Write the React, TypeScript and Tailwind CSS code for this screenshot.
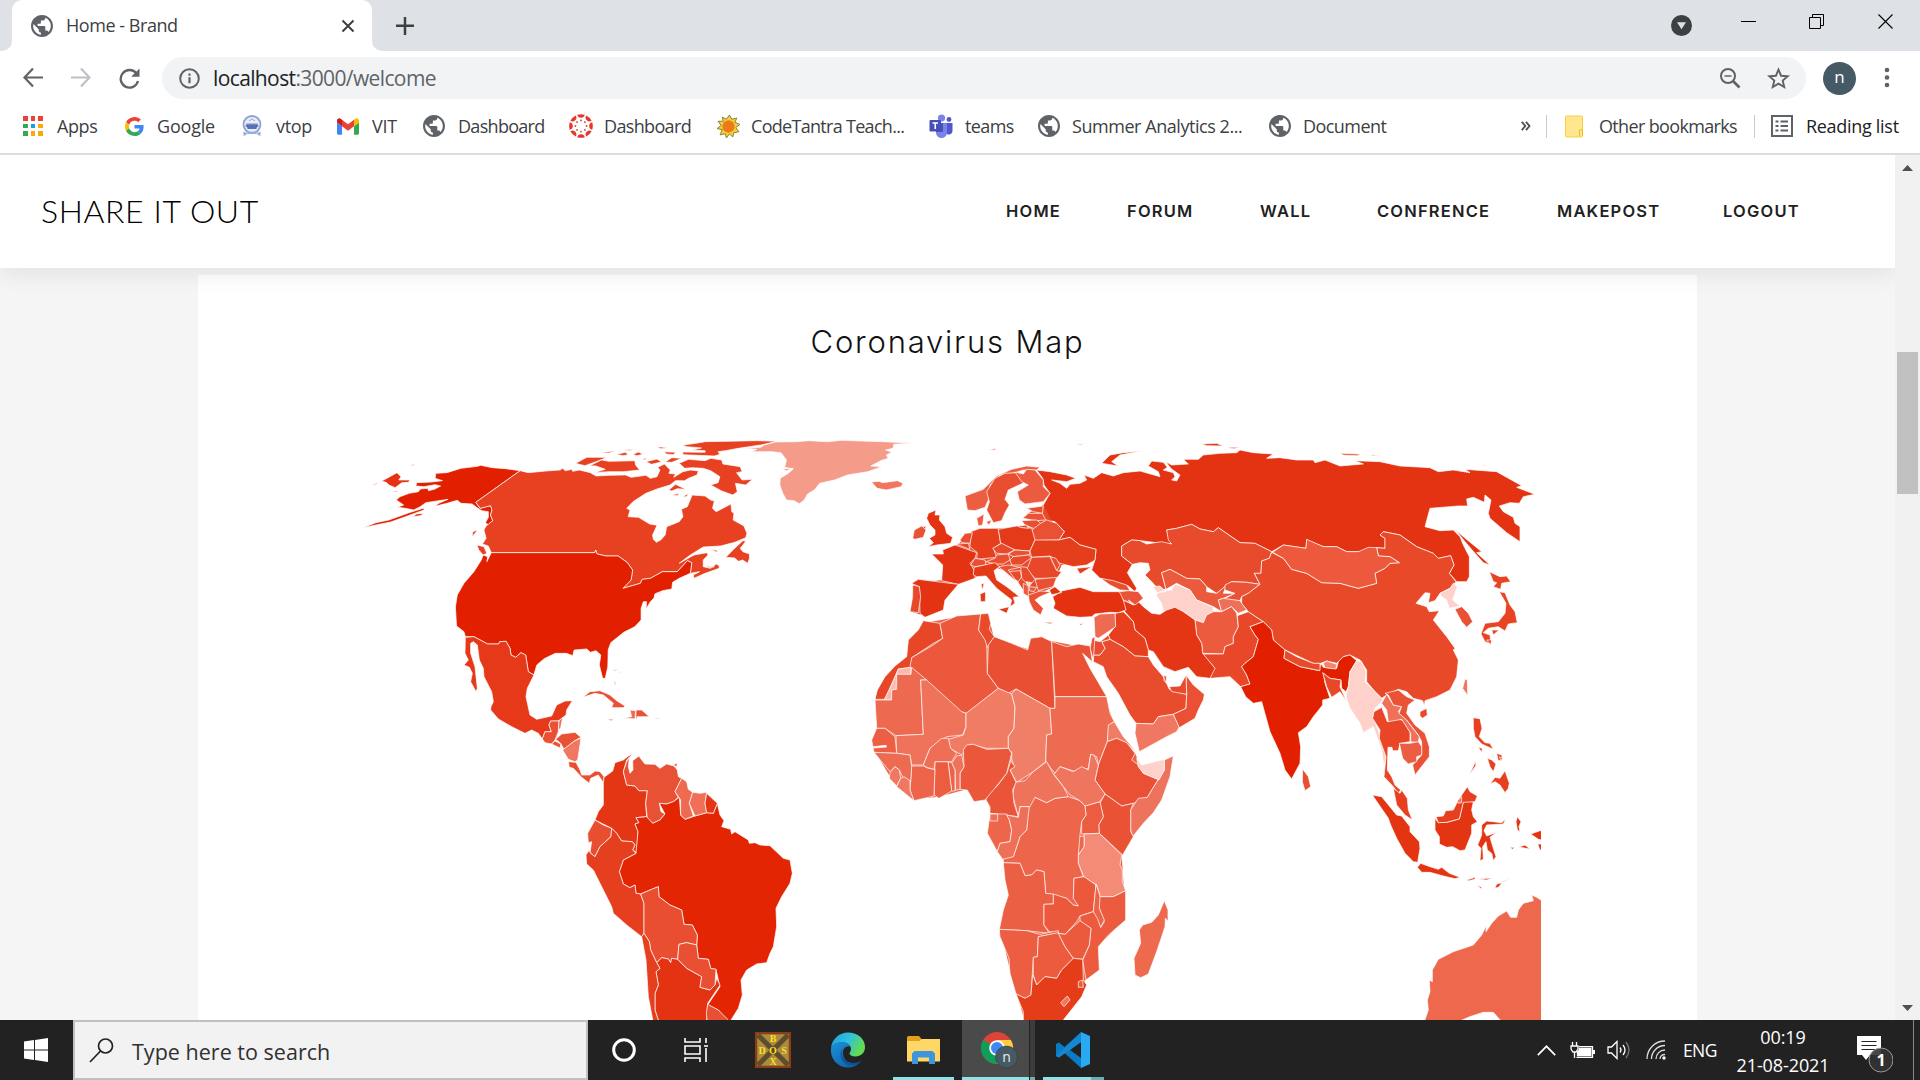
import React from "react";

type Shape = [fill: string, d: string];

const northAmerica: Shape[] = [
  ["#e22000", "M232,160 L262,158 300,145 345,139 353,136 385,143 420,146 460,152 340,247 352,265 380,257 384,270 380,285 386,302 374,314 366,308 374,292 374,275 356,272 342,262 330,252 300,250 290,241 262,250 230,259 240,250 265,238 235,243 205,248 190,260 172,270 150,265 128,262 145,255 125,240 135,230 160,220 185,215 190,207 210,205 212,212 228,208 245,198 230,194 200,200 178,198 180,188 220,186 250,182 230,175Z"],
  ["#e43312", "M85,184 L127,158 138,170 132,180 162,180 158,187 140,188 122,203 105,195 98,187Z"],
  ["#e43312", "M60,195 L80,186 68,194Z"],
  ["#e43312", "M160,136 L178,133 168,137Z"],
  ["#e43312", "M110,213 L128,213 126,216Z"],
  ["#e22000", "M36,323 L70,308 105,300 160,278 200,264 200,270 150,290 110,306 70,315Z"],
  ["#e22000", "M170,290 L180,282 200,280 190,287Z"],
  ["#e74121", "M460,152 L482,158 530,153 568,150 575,145 582,152 600,148 602,154 620,150 650,158 665,168 700,166 745,165 760,172 800,166 812,175 830,170 838,150 832,142 850,132 866,150 862,160 880,162 875,172 900,155 920,150 942,153 938,165 915,175 905,182 880,182 865,195 830,207 800,220 765,245 748,265 757,270 752,290 780,292 810,312 830,316 818,345 820,358 828,367 840,360 852,345 856,320 890,305 900,290 896,268 912,260 925,225 960,228 975,240 985,243 980,265 990,275 1030,252 1032,275 1038,280 1036,300 1065,318 1073,340 1070,353 1040,367 1002,378 955,381 920,405 890,430 930,405 965,398 968,405 955,420 955,440 975,445 990,432 998,437 998,445 960,460 930,475 928,465 945,455 920,460 924,428 912,422 885,455 845,455 812,475 790,478 785,490 738,505 760,480 764,450 750,428 725,408 692,408 668,402 664,390 662,398 382,398 374,378 358,372 368,355 362,330 368,318 386,302 380,285 384,270 380,257 352,265 340,247Z"],
  ["#e74121", "M1016,412 L1040,385 1062,362 1070,364 1055,385 1062,395 1080,402 1080,415 1075,430 1062,420 1050,424 1040,414Z"],
  ["#e74121", "M343,375 L362,380 370,400 360,405 348,390Z"],
  ["#e74121", "M330,350 L332,335 345,330 338,340Z"],
  ["#e74121", "M975,387 L995,392 990,396Z M958,430 L970,440 985,440 970,443Z"],
  ["#e74121", "M648,137 L680,120 700,124 740,123 770,122 772,135 783,150 740,155 700,155 660,158 690,148 665,138Z"],
  ["#e74121", "M610,130 L640,112 695,112 665,125 635,137 620,133Z"],
  ["#e74121", "M890,130 L915,118 960,122 975,115 1005,120 1008,132 1055,140 1060,155 1045,158 1060,180 1088,178 1070,195 1042,190 1047,215 1035,225 1005,213 975,195 995,188 1000,170 975,152 955,145 925,143 905,145Z"],
  ["#e74121", "M862,210 L880,193 908,208 885,206 870,213Z M870,225 L890,220 885,227Z M900,230 L915,220 910,230Z"],
  ["#e74121", "M675,98 L720,92 700,99Z M720,103 L745,97 752,104 738,107Z M765,103 L780,96 792,103 775,107Z M800,125 L830,117 842,126 815,133Z M852,126 L870,113 897,115 870,127Z M830,80 L860,83 840,86Z M790,118 L802,114 798,120Z M740,90 L770,88 755,92Z M850,95 L880,97 875,104 855,102Z"],
  ["#e74121", "M900,75 L935,70 960,65 1100,62 1155,64 1110,75 1050,85 1015,92 995,95 1000,103 985,108 940,106 900,104 900,96 960,97 960,92 925,90 950,84 910,80Z"],
  ["#f49c89", "M1065,84 L1110,82 1120,75 1150,66 1210,65 1240,62 1290,65 1330,61 1380,63 1440,65 1520,69 1470,73 1468,85 1448,90 1465,97 1450,105 1455,115 1435,122 1408,138 1438,140 1400,155 1345,165 1310,180 1270,190 1255,210 1237,222 1228,240 1215,251 1200,242 1180,240 1170,220 1162,195 1163,175 1185,160 1198,147 1175,142 1180,120 1165,98 1140,95 1085,95 1100,88Z M1168,146 L1198,145 1180,152Z"],
  ["#f07660", "M1410,186 L1430,184 1440,188 1480,182 1495,190 1490,200 1450,210 1425,205Z"],
  ["#e22000", "M382,398 L662,398 664,390 668,402 692,408 725,408 750,428 764,450 760,480 738,505 785,490 790,478 812,475 845,455 885,455 912,422 924,428 920,460 890,475 872,487 870,507 845,512 824,522 822,534 812,545 800,568 802,545 793,545 787,565 787,600 770,620 740,637 705,668 698,690 697,740 690,775 683,775 674,735 678,705 665,692 650,697 640,687 606,690 602,707 585,700 555,700 525,716 505,735 497,765 482,755 475,705 462,698 448,712 435,705 433,685 422,664 405,665 402,672 372,672 335,650 312,650 308,635 288,618 285,560 290,525 308,490 335,455 355,420 360,405 372,410 370,425Z"],
  ["#e22000", "M828,520 L850,517 830,521Z"],
  ["#ed6a50", "M712,750 L728,748 715,753Z M728,750 L732,760 729,758Z M713,778 L720,795 715,792Z"],
];

const southAmerica: Shape[] = [
  ["#e5391a", "M76,-68 L102,-70 143,-48 176,-48 179,-55 198,-56 210,-35 213,-15 227,-8 243,-22 257,-15 265,35 282,45 262,85 258,110 270,165 290,178 335,168 350,135 375,123 397,122 380,150 378,165 355,183 332,183 327,195 334,215 315,215 307,237 295,220 275,210 255,220 215,200 175,177 152,150 153,140 160,125 155,95 132,50 130,25 118,0 112,-45 100,-55 92,-50 92,-20 105,20 112,85 108,95 92,65 97,40 88,22 72,15 85,0 75,-20Z"],
  ["#ea5033", "M332,183 L357,183 355,215 345,240 335,252 315,248 307,237 315,215 334,215 327,195Z"],
  ["#ef6f57", "M357,183 L368,172 362,203 355,212Z"],
  ["#ea5033", "M347,238 L365,222 405,217 423,232 403,243 372,268 362,250Z"],
  ["#ea5033", "M335,252 L345,243 362,252 360,264Z"],
  ["#f07760", "M423,235 L413,300 405,305 385,298 368,270 403,243Z"],
  ["#ea4f32", "M385,305 L408,307 420,330 425,345 450,345 465,333 480,335 492,350 490,368 475,345 452,355 448,370 425,352 400,325 388,322Z"],
  ["#ea5033", "M428,112 L450,95 480,92 510,105 530,122 555,138 550,143 515,143 520,130 490,105 465,100Z"],
  ["#ea5033", "M500,177 L520,178 515,182Z M588,150 L605,150 628,170 592,170 588,182Z"],
  ["#ee6b51", "M570,150 L587,152 585,177 552,174 575,170Z M523,58 L528,75 523,72Z M520,30 L535,29 525,33Z"],
  ["#fdc9c0", "M645,174 L662,175 660,178 646,178Z"],
  ["#e43514", "M578,282 L560,300 550,335 560,375 585,378 597,392 622,392 617,430 620,470 588,473 597,488 585,492 594,515 590,578 578,570 585,555 577,545 545,543 530,520 515,505 465,480 475,455 490,435 490,370 492,352 518,333 525,308 550,300 565,288Z"],
  ["#e95134", "M560,305 L568,292 565,320 570,340 579,330 578,302 597,288 603,297 615,312 645,313 660,325 680,312 702,318 712,330 715,350 725,355 715,375 705,395 715,412 700,425 680,432 658,430 663,455 675,462 660,480 638,490 622,475 617,430 622,392 597,392 585,378 560,375 550,335Z M700,315 L712,308 710,320Z"],
  ["#e32503", "M832,430 L840,465 852,482 845,500 872,508 875,522 885,515 925,540 928,550 945,548 960,555 990,557 1030,595 1050,600 1057,640 1050,670 1025,710 1008,745 1010,800 1000,860 990,880 980,908 950,912 920,930 903,960 907,1005 895,1045 870,1085 865,1085 835,1050 803,1035 840,980 835,960 828,928 812,925 805,898 775,895 770,855 772,825 757,795 732,793 725,750 690,735 657,710 655,680 635,688 602,702 588,700 585,675 570,683 550,672 538,635 550,600 588,580 594,515 585,492 597,488 588,473 620,470 638,490 660,480 675,462 658,430 680,432 700,425 718,412 722,465 735,478 765,468 800,458 820,460Z"],
  ["#ee6a51", "M725,355 L740,365 745,388 758,397 748,430 760,468 735,478 722,465 722,420 705,395 715,375Z"],
  ["#ef6f57", "M758,397 L780,400 800,397 795,430 800,458 765,468 748,430Z"],
  ["#e43514", "M800,400 L832,430 820,460 800,458 795,430Z"],
  ["#e84e30", "M465,480 L490,495 515,505 513,530 480,560 465,590 450,578 455,545 445,548 443,520Z"],
  ["#e53f1f", "M515,505 L530,520 545,543 577,545 585,555 578,570 588,580 550,600 538,635 550,672 570,683 585,675 588,700 602,702 612,730 612,820 605,830 560,795 520,760 515,740 480,670 460,630 440,612 438,585 448,570 450,578 465,590 480,560 513,530Z"],
  ["#e94e31", "M602,702 L635,688 655,680 657,710 690,735 725,750 732,793 757,795 772,825 770,855 740,848 717,853 713,898 695,895 692,908 685,897 665,893 650,908 632,870 628,845 612,820 612,730Z"],
  ["#e43313", "M650,908 L665,893 685,897 692,908 695,895 713,898 740,925 785,950 780,982 810,990 825,975 830,955 840,975 803,1030 800,1090 658,1090 645,1050 645,1000 655,975 648,935 660,925Z"],
  ["#e95033", "M717,853 L740,848 770,855 775,895 805,898 812,925 828,928 825,975 810,990 780,982 785,950 740,925 713,898Z"],
  ["#e53f1f", "M612,820 L628,845 632,870 650,908 660,925 648,935 655,975 645,1000 645,1050 658,1090 640,1090 625,1010 618,900 605,830Z"],
  ["#e94f32", "M803,1033 L835,1050 865,1080 865,1095 803,1095 799,1060Z"],
];

const europe: Shape[] = [
  ["#f49c89", "M325,0 L350,-6 345,1Z"],
  ["#ec5d41", "M255,138 L310,118 350,78 395,58 440,48 480,52 470,60 430,60 405,68 360,75 330,105 325,150 315,172 285,182 262,180Z"],
  ["#e84e2f", "M320,125 L345,85 375,70 415,68 432,98 385,120 375,148 388,165 375,188 365,212 340,218 320,180 328,155Z"],
  ["#ec5b3f", "M405,66 L430,72 440,58 465,60 490,90 490,110 510,130 490,155 435,162 418,150 412,125 445,105 425,95Z"],
  ["#e84d2f", "M440,175 L490,168 487,190 460,185Z"],
  ["#ea5337", "M428,205 L445,190 487,190 497,210 470,212Z"],
  ["#e84e30", "M425,212 L470,210 482,220 468,238 435,225Z"],
  ["#ea5134", "M482,220 L500,210 530,220 553,245 537,270 455,272 455,240Z"],
  ["#ec5d41", "M290,205 L312,192 308,225 295,228Z M318,215 L335,210 328,225Z"],
  ["#e43312", "M145,190 L168,180 165,195 180,195 178,210 195,230 200,250 218,262 212,280 170,285 145,290 160,278 148,265 165,255 165,240 150,225 140,205Z M125,232 L138,228 135,240Z"],
  ["#ea5236", "M98,265 L103,240 125,228 138,240 130,262 105,268Z"],
  ["#e43312", "M155,312 L190,312 188,300 225,285 290,308 285,325 270,340 285,365 285,385 235,403 185,392 188,345Z"],
  ["#e43312", "M95,400 L115,388 235,403 195,450 190,480 135,502 120,490 118,410Z"],
  ["#e84929", "M98,405 L118,410 122,440 115,488 90,485 98,440Z"],
  ["#e73f1e", "M272,245 L300,235 355,235 362,280 340,295 350,322 290,328 292,308 270,290Z"],
  ["#e94e30", "M240,270 L255,250 277,248 270,280 245,278Z"],
  ["#e74525", "M228,282 L265,280 270,298Z"],
  ["#e53a19", "M355,238 L410,228 455,235 465,270 450,303 405,300 362,280Z"],
  ["#e84a2b", "M338,295 L365,280 405,300 380,312 350,310Z"],
  ["#ea5236", "M385,312 L405,300 450,303 448,315 400,320Z"],
  ["#e84e2f", "M318,335 L345,325 350,315 385,312 390,330 370,342 345,342Z"],
  ["#e84e2f", "M272,345 L285,325 315,330 318,345 285,350Z"],
  ["#e84a2b", "M390,330 L400,320 445,315 455,322 425,345 395,345Z"],
  ["#e53e1c", "M450,303 L465,270 537,270 570,262 600,285 648,298 645,330 620,345 580,350 540,340 510,318 455,322Z M590,355 L635,350 600,372Z"],
  ["#e94d2f", "M510,320 L528,325 540,345 530,362Z"],
  ["#e84829", "M455,322 L510,320 530,362 545,365 530,385 465,385 440,360Z"],
  ["#ea5134", "M465,388 L530,382 520,410 475,422Z"],
  ["#e84a2b", "M422,350 L440,352 465,388 448,408 425,385Z M380,365 L420,362 425,380 415,395 385,375Z"],
  ["#ea5033", "M355,350 L385,345 420,352 385,360 410,395 375,365Z"],
  ["#fed2cb", "M438,395 L455,398 446,410Z"],
  ["#ec5b3f", "M430,400 L445,408 445,440 430,430Z M448,410 L470,412 462,425 448,422Z"],
  ["#ea5236", "M445,435 L480,423 515,425 480,440 465,450 490,475 482,495 460,480 448,455Z M490,515 L522,518 510,522Z"],
  ["#e43a18", "M282,352 L345,338 358,350 342,362 350,390 380,410 418,440 400,442 405,460 390,470 395,450 350,415 318,378 290,380 280,375Z M355,478 L388,470 380,490Z M300,432 L317,425 316,455 302,455Z M303,403 L312,400 308,420Z"],
  ["#e84e30", "M415,228 L440,225 445,235 420,232Z"],
  ["#e43110", "M518,440 L548,422 600,412 640,425 690,425 725,425 730,450 738,480 715,488 690,487 645,492 635,500 600,502 560,498 520,475 525,460Z M508,420 L525,410 545,428 515,434Z"],
  ["#e84e30", "M662,385 L700,392 740,405 750,422 720,420 690,405Z"],
  ["#ea5337", "M718,425 L745,422 775,425 790,445 765,465 745,450 755,460 730,450Z"],
  ["#e84a2b", "M598,522 L612,520 602,526Z"],
];

const africa: Shape[] = [
  ["#e74727", "M190,92 L240,100 248,145 220,160 155,203 155,232 115,237 100,270 75,328 45,328 52,300 75,260 105,228 140,200 145,150 175,120Z"],
  ["#fbb8ac", "M115,237 L153,232 153,253 110,253 108,298 95,300 95,330 72,330 100,275Z"],
  ["#eb583b", "M240,100 L290,78 362,72 356,120 380,155 382,250 415,295 320,370 302,365 150,230 155,203 220,165 248,145Z"],
  ["#e84a2a", "M362,72 L385,70 392,100 388,118 403,140 382,172 375,150 356,120Z"],
  ["#e95033", "M403,140 L455,160 503,180 512,145 545,140 575,155 585,355 570,355 468,297 445,310 415,295 382,250 385,165Z"],
  ["#ea5135", "M575,155 L620,170 655,162 690,168 697,215 668,190 690,235 740,320 585,320Z"],
  ["#ed6a50", "M110,253 L153,253 155,232 200,270 182,270 190,433 108,437 75,415 50,415 45,330 95,330 95,300 110,298Z"],
  ["#ee735a", "M182,270 L200,270 305,365 318,370 318,410 308,435 260,440 210,475 190,525 155,525 150,495 110,490 108,437 190,433Z"],
  ["#f07c64", "M318,370 L415,295 455,312 465,350 462,415 445,440 445,475 380,475 330,462 305,495 270,475 265,448 310,435 318,410Z"],
  ["#f07f68", "M455,312 L468,297 570,355 575,432 560,435 557,515 520,545 470,577 450,540 462,530 445,470 445,440 462,415 465,350Z"],
  ["#ed6b51", "M570,355 L585,355 585,320 740,320 750,370 763,395 748,405 742,455 715,525 710,500 692,493 685,535 640,543 600,530 585,550 557,515 560,435 575,432Z"],
  ["#f07c64", "M745,405 L763,395 790,440 833,490 800,460 770,445 742,455Z"],
  ["#ea5134", "M742,455 L770,445 800,458 825,490 815,510 832,522 850,550 895,568 862,622 820,640 785,648 735,612 705,570 715,525Z"],
  ["#ee735c", "M895,568 L913,540 913,510 940,498 930,560 905,630 880,668 850,700 818,740 812,720 812,660 835,625 862,622Z"],
  ["#fed2cb", "M830,505 L845,525 913,508 913,540 897,570 850,550 835,530Z"],
  ["#ea5236", "M720,640 L735,612 785,648 820,640 812,660 812,725 820,740 788,795 718,730 716,705 730,680Z"],
  ["#ec5c40", "M675,648 L720,635 730,680 716,705 718,730 665,732 665,695 678,675Z"],
  ["#f48b77", "M672,732 L718,730 785,795 780,825 787,840 787,875 797,902 760,920 720,920 710,885 672,862 655,820 655,795 672,770Z"],
  ["#ed664b", "M655,740 L672,738 672,770 655,795Z"],
  ["#ed664b", "M510,625 L525,622 560,638 585,625 625,620 660,632 675,648 678,675 665,695 660,735 655,795 655,820 670,860 642,865 640,925 655,935 655,948 640,945 620,925 580,915 557,910 552,845 530,840 515,855 495,857 480,820 430,818 430,800 460,800 480,740 500,720 505,650Z"],
  ["#ef755e", "M582,553 L600,530 640,545 665,530 685,540 692,493 702,495 715,525 705,570 735,612 720,635 675,648 660,632 630,615 610,590Z"],
  ["#ee735b", "M465,577 L495,572 520,545 560,515 582,555 610,590 625,620 585,625 560,638 525,622 510,650 480,650 475,680 458,615Z"],
  ["#ea5438", "M455,485 L450,510 465,530 450,540 468,577 458,600 462,640 475,680 390,670 390,650 378,630 385,605 410,590 440,550 455,505Z"],
  ["#eb573a", "M320,465 L340,463 380,478 445,475 455,490 440,550 410,588 375,630 342,635 322,600 300,598 300,550 312,530 310,480Z"],
  ["#ee735a", "M290,498 L305,495 312,530 300,550 300,598 287,601 285,540 275,520Z"],
  ["#ec6348", "M264,515 L275,518 285,540 285,603 275,603Z"],
  ["#ec5c40", "M225,515 L264,515 275,603 237,625 222,615Z"],
  ["#ed644a", "M155,528 L190,528 205,535 225,538 222,618 162,632 150,600Z"],
  ["#ee6e56", "M190,525 L210,475 245,445 265,445 272,475 290,490 275,515 225,515 222,538 200,532Z"],
  ["#ec5f44", "M50,415 L75,415 105,440 110,490 42,487 35,450Z"],
  ["#ed6b51", "M42,487 L110,490 150,495 155,530 152,575 130,565 118,540 105,530 90,545 65,515Z"],
  ["#f07760", "M90,548 L105,530 118,540 122,565 110,588 88,565Z"],
  ["#f07760", "M110,590 L122,565 132,560 150,572 150,600 162,632Z"],
  ["#ffffff", "M40,470 L78,466 80,471 42,474Z"],
  ["#ed664c", "M390,672 L440,672 448,690 455,720 450,755 420,760 412,785 382,730Z"],
  ["#ee7058", "M390,672 L413,672 413,693 390,693Z"],
  ["#ee7058", "M440,675 L475,682 480,650 508,650 500,720 480,740 460,800 428,808 412,785 420,760 450,755 455,720 448,690Z"],
  ["#eb6045", "M430,818 L480,820 495,857 515,855 530,840 552,845 557,910 580,912 580,942 552,943 552,1005 568,1030 500,1022 418,1018 430,960 445,915 435,870Z"],
  ["#eb583c", "M552,943 L580,942 580,912 620,925 640,945 655,948 640,925 642,865 672,860 708,885 700,965 660,978 650,995 615,1033 568,1025 552,1005Z"],
  ["#ec5b3f", "M708,882 L720,920 760,920 797,902 797,990 745,1035 715,1070 718,1140 678,1170 668,1110 688,1065 693,1015 660,995 660,978 700,965 712,970 722,1012 733,995 718,955Z"],
  ["#ed6348", "M708,882 L720,918 718,955 733,990 722,1012 712,985 700,965Z"],
  ["#ec5d42", "M418,1018 L500,1022 540,1033 595,1022 595,1030 535,1040 532,1100 520,1102 513,1215 495,1225 468,1212 450,1150 447,1105 420,1040Z"],
  ["#ec5b3e", "M535,1040 L595,1028 615,1070 640,1105 605,1140 590,1165 555,1160 530,1185 520,1155 520,1102 532,1100Z"],
  ["#eb5a3d", "M595,1030 L615,1033 660,992 693,1015 688,1065 668,1108 640,1105 615,1070Z"],
  ["#e53c1a", "M468,1212 L495,1225 513,1215 518,1155 530,1185 555,1160 590,1165 605,1140 640,1105 668,1108 670,1170 680,1185 665,1220 610,1290 600,1305 490,1305 490,1265Z"],
  ["#ec5b3e", "M655,1175 L668,1170 670,1192 655,1192Z"],
  ["#ef755e", "M602,1238 L622,1218 630,1230 612,1250Z"],
  ["#ed6a4f", "M913,932 L924,960 924,993 916,985 915,1010 890,1085 865,1152 842,1163 825,1155 822,1105 842,1060 838,1020 848,1005 875,997 895,975Z"],
];

const asia: Shape[] = [
  ["#e43312", "M-130,120 L-90,125 -40,135 -13,145 -40,155 -85,150 -60,160 -40,175 -30,163 0,160 20,150 12,135 40,145 65,128 100,138 130,128 180,123 240,140 235,125 205,108 215,93 250,97 262,112 250,120 280,128 285,140 275,150 290,153 300,135 272,115 258,95 275,105 325,102 310,88 355,88 370,75 420,70 470,68 480,60 520,68 580,72 560,85 600,83 650,90 700,90 705,98 735,90 780,108 815,105 850,102 825,92 900,95 960,108 1050,113 1075,125 1120,120 1170,128 1155,118 1250,125 1325,167 1310,172 1365,193 1330,200 1318,220 1290,218 1258,228 1270,245 1300,262 1305,280 1320,290 1320,335 1280,308 1230,265 1225,250 1233,210 1215,195 1213,217 1180,202 1160,207 1163,228 1135,228 1110,230 1050,235 1035,290 1080,302 1120,300 1140,320 1150,345 1168,380 1168,440 1160,455 1130,455 1108,430 1122,405 1112,377 1075,385 1060,370 1010,350 960,315 910,305 900,315 915,325 915,355 890,353 850,365 800,365 770,350 730,350 680,330 678,355 610,345 575,365 525,340 480,338 415,293 400,305 360,297 335,283 290,295 260,300 265,320 275,342 245,340 180,332 155,330 125,348 125,378 157,403 142,428 152,445 170,475 165,485 145,468 100,455 60,445 35,420 45,390 48,358 0,345 -30,322 -63,330 -47,305 -75,275 -103,270 -113,250 -110,225 -90,190 -108,165 -112,145Z"],
  ["#e43312", "M1125,298 L1150,320 1205,365 1190,368 1230,405 1210,398 1185,370 1155,335Z"],
  ["#e43312", "M65,100 L90,75 130,68 185,63 120,75 95,95 115,108Z M365,42 L410,40 430,48 380,47Z M440,52 L480,52 460,56Z M780,70 L845,73 830,77 790,75Z M870,74 L900,76 880,77Z M1208,105 L1218,107 1210,108Z"],
  ["#fbb8ac", "M-10,42 L22,40 0,46Z"],
  ["#e84b2b", "M155,330 L180,332 200,342 245,335 275,342 265,330 260,300 290,295 335,283 360,297 400,305 415,293 480,338 525,340 575,365 568,385 545,393 543,430 523,430 540,463 500,457 455,455 435,470 410,490 380,470 360,447 320,445 270,418 245,428 258,478 235,478 215,455 195,435 210,420 205,400 180,398 157,403 125,378 125,348Z"],
  ["#eb5a3d", "M245,428 L270,418 320,445 360,447 380,470 380,485 410,490 440,465 430,490 465,490 430,505 415,510 425,545 400,530 350,510 330,480 290,460 258,478Z"],
  ["#fed2cb", "M228,495 L240,485 275,480 285,462 305,470 330,480 350,510 400,532 400,545 380,555 370,578 345,570 310,545 275,535 250,545 245,520Z M218,470 L240,468 258,485 232,488Z"],
  ["#ea5337", "M435,465 L455,455 500,457 540,463 505,490 485,500 480,512 430,508 465,490 435,480Z"],
  ["#ef7058", "M415,510 L430,505 480,512 500,540 475,550 455,530 425,545Z"],
  ["#ec5b3e", "M345,570 L370,578 380,555 400,545 425,545 455,530 470,550 475,590 460,620 460,640 435,650 430,672 368,670 365,640 350,615Z"],
  ["#e84829", "M368,672 L430,672 435,650 460,640 460,620 475,590 472,557 505,545 550,575 510,590 525,615 535,628 520,680 495,700 485,710 500,735 510,762 482,770 450,740 390,745 390,720 405,715Z"],
  ["#e43614", "M130,510 L160,525 175,515 190,530 215,550 240,553 260,540 285,532 310,545 345,570 350,615 365,640 368,670 405,715 390,745 350,740 325,712 285,725 250,710 220,665 205,660 195,625 165,600 160,575 130,540Z"],
  ["#e73f1e", "M105,550 L130,545 160,575 165,600 195,625 205,660 205,680 165,678 130,650 90,628 85,615 105,590Z"],
  ["#e84c2d", "M90,628 L130,650 165,678 205,680 220,705 250,740 268,778 320,793 318,835 280,853 235,860 220,882 168,880 150,855 115,790 80,740 70,710 40,695 40,675 60,675 75,655 65,635Z M252,735 L260,740 258,758 252,752Z"],
  ["#f07862", "M168,880 L220,882 235,860 280,853 298,890 290,905 260,920 178,965 165,910Z"],
  ["#ea5134", "M318,735 L340,765 373,793 370,810 355,840 345,865 298,893 280,853 318,835 320,793Z"],
  ["#e84b2c", "M268,770 L300,768 318,735 320,793 275,785Z"],
  ["#ee6b53", "M42,562 L60,552 105,550 107,590 55,625 45,620Z"],
  ["#e94e30", "M40,630 L60,635 85,615 90,628 65,635 75,655 60,675 40,675Z"],
  ["#ea5438", "M36,625 L45,620 40,690 30,655Z"],
  ["#e84929", "M575,367 L610,385 635,418 680,430 725,458 780,460 835,475 890,460 885,430 915,415 930,400 958,398 930,380 895,378 890,353 915,355 915,325 900,315 910,305 960,315 1010,350 1060,370 1075,385 1112,377 1122,405 1108,430 1128,455 1110,475 1080,490 1065,512 1045,518 1050,490 1035,488 1008,520 1040,530 1048,545 1078,542 1060,570 1100,620 1125,655 1120,660 1135,690 1130,740 1110,780 1070,800 1035,812 1033,828 1028,812 1000,805 980,785 955,778 920,795 905,805 885,785 860,755 860,720 840,690 810,675 790,680 770,700 740,693 722,700 700,700 615,660 580,630 575,600 550,575 505,545 485,520 485,500 505,490 540,463 523,430 543,430 545,393 568,385Z"],
  ["#ec593c", "M578,367 L610,345 678,355 680,328 730,350 770,350 800,365 835,365 865,352 890,353 895,378 930,380 958,398 930,400 915,415 885,430 890,460 835,475 780,460 725,458 680,430 635,418 610,385Z"],
  ["#e22000", "M510,590 L550,575 575,600 580,630 615,660 612,685 660,710 718,722 722,700 730,712 770,715 775,695 790,680 810,675 830,692 810,725 805,770 798,785 785,775 783,750 750,745 730,730 735,760 750,805 728,810 728,825 700,860 680,890 655,908 662,950 660,1000 635,1047 615,1020 600,970 570,905 545,815 520,820 497,800 482,770 510,762 500,735 485,710 495,700 520,680 535,628 525,615Z"],
  ["#e84b2c", "M615,660 L650,680 700,700 720,700 720,722 660,710 612,685Z"],
  ["#f28570", "M730,700 L740,693 770,703 768,717 735,713Z"],
  ["#e84828", "M728,728 L750,745 783,750 780,770 800,815 780,785 755,802 740,770Z"],
  ["#fed2cb", "M830,692 L845,695 858,725 855,755 885,785 910,810 885,835 878,860 895,900 905,935 918,980 912,1010 905,960 880,890 850,908 840,880 810,835 798,800 805,770 810,725Z"],
  ["#fed2cb", "M1080,490 L1110,475 1120,460 1132,470 1118,510 1140,528 1108,535 1100,510 1085,500Z"],
  ["#ea5033", "M1125,538 L1145,530 1165,550 1178,575 1160,592 1145,575Z"],
  ["#e84323", "M1228,425 L1260,440 1280,438 1292,455 1265,460 1262,478 1240,470 1250,458 1240,455Z M1258,485 L1275,488 1290,525 1305,545 1312,578 1285,582 1275,603 1255,590 1225,595 1210,608 1230,615 1233,642 1215,635 1203,612 1215,580 1255,575 1275,550 1278,520Z M1235,600 L1257,600 1240,615Z"],
  ["#f07660", "M1155,747 L1162,750 1163,797 1148,775Z"],
  ["#e84929", "M1020,845 L1040,835 1042,855 1028,865 1020,858Z"],
];

const southEastAsia: Shape[] = [
  ["#e84e30", "M368,387 L385,410 392,440 375,452 367,425Z"],
  ["#e84626", "M578,235 L582,215 605,202 622,245 650,235 670,242 690,275 690,305 660,310 655,332 638,332 636,322 624,322 622,390 635,410 645,435 662,450 655,460 640,440 612,410 618,350 598,295 600,270Z"],
  ["#ef715a", "M605,190 L620,163 640,195 665,200 655,215 680,240 718,290 715,308 692,305 692,280 665,238 625,245 620,210Z"],
  ["#ea5236", "M615,160 L655,150 680,170 705,180 685,195 680,220 705,255 735,280 748,320 748,350 705,405 698,375 725,345 725,305 715,285 680,240 657,220 665,200 640,195 625,165Z"],
  ["#ec5e43", "M658,310 L690,310 715,305 725,320 725,345 710,350 710,365 685,372 668,355Z"],
  ["#e73f1f", "M640,445 L660,460 665,450 682,475 685,510 697,540 675,525 650,495Z"],
  ["#e43513", "M577,465 L605,470 650,525 665,528 690,560 690,575 718,605 720,625 713,667 700,665 675,640 650,595 632,555 625,535Z"],
  ["#e43513", "M712,682 L722,670 750,680 775,688 785,682 808,700 840,712 825,716 790,708 750,697 725,697Z"],
  ["#e43513", "M765,535 L775,548 800,547 838,537 850,485 880,485 875,510 880,530 892,545 875,555 875,580 855,630 840,632 818,620 800,622 778,612 778,590 765,570Z"],
  ["#e73f1f", "M768,530 L790,528 797,512 820,510 835,480 862,440 870,455 892,468 885,485 850,487 838,537 825,540 800,547 775,548Z"],
  ["#f07660", "M832,482 L845,470 845,488 835,490Z"],
  ["#e43513", "M905,555 L920,543 965,548 977,537 970,552 920,555 912,572 920,588 950,577 930,592 940,625 948,650 940,662 935,640 922,630 918,605 908,620 910,658 900,662 903,625 893,615 905,585Z"],
  ["#e43513", "M1012,530 L1023,545 1017,560 1020,575 1012,570 1008,545Z M1052,582 L1080,572 1095,572 1095,602 1075,598Z M1073,612 L1095,612 1095,632 1080,630Z M1015,622 L1035,615 1050,627 1020,622Z M990,622 L1003,622 997,628Z"],
  ["#e43513", "M860,720 L885,712 885,718 865,722Z M900,716 L938,714 920,720 900,718Z M890,735 L905,742 903,746Z M945,745 L950,732 967,728 955,742Z"],
  ["#f07660", "M967,725 L995,714 970,727Z"],
  ["#e73f1f", "M880,233 L900,236 906,265 898,290 915,308 930,310 940,328 905,312 885,290 880,265Z M895,322 L907,325 905,337Z M868,405 L888,362 887,378Z M950,340 L965,345 968,360 955,362Z M922,355 L935,360 948,372 940,395 930,380Z M958,350 L968,355 962,360Z M930,433 L945,412 960,415 975,392 988,430 985,445 975,458 960,435 945,425Z"],
  ["#e84323", "M920,0 L935,0 932,14Z"],
  ["#ee684d", "M733,1145 L745,1110 742,1080 750,1055 748,1020 757,1025 757,990 775,958 820,935 880,915 905,885 918,858 918,875 935,850 955,828 980,813 992,832 1010,832 1015,810 1030,790 1060,782 1055,765 1070,772 1095,788 1095,1145 965,1145 940,1117 910,1117 870,1130 835,1145Z"],
];

const europeBase =
  "M100,402 L155,394 190,390 190,320 228,288 272,250 300,237 455,232 445,190 490,165 545,270 645,300 640,335 545,345 528,385 518,412 480,430 447,438 430,420 412,392 385,365 345,352 285,383 235,403 195,450 135,498 95,485Z";

const africaBase =
  "M195,98 L290,82 385,75 402,145 503,177 515,147 560,150 650,168 740,330 760,400 828,495 838,527 912,512 932,508 905,625 816,735 785,795 792,902 792,990 712,1070 714,1140 674,1172 660,1220 610,1280 492,1285 472,1215 452,1150 422,1020 447,915 434,815 388,732 393,660 380,630 345,630 320,598 237,620 162,628 92,563 47,487 40,450 52,420 48,330 105,235 145,200 150,150Z";

function Land({ shapes, transform, base }: { shapes: Shape[]; transform: string; base?: [string, string] }) {
  return (
    <g transform={transform} stroke="#fff" strokeWidth={0.7} strokeLinejoin="round">
      {base && <path d={base[1]} fill={base[0]} stroke="none" />}
      {shapes.map(([fill, d], i) => (
        <path key={i} d={d} fill={fill} vectorEffect="non-scaling-stroke" />
      ))}
    </g>
  );
}

function WorldMap() {
  return (
    <svg className="block h-[620px] w-[1187px]" viewBox="354 400 1187 620">
      <Land shapes={northAmerica} transform="translate(350 420) scale(.3699 .33333)" />
      <Land shapes={southAmerica} transform="translate(440 660) scale(.33333)" />
      <Land shapes={asia} transform="translate(1080 430) scale(.33333)" />
      <Land shapes={europe} base={["#e84b2b", europeBase]} transform="translate(880 450) scale(.33333)" />
      <Land shapes={africa} base={["#ed664b", africaBase]} transform="translate(860 590) scale(.33333)" />
      <Land shapes={southEastAsia} transform="translate(1180 640) scale(.33333)" />
    </svg>
  );
}

function Globe() {
  return (
    <svg className="size-[22px] shrink-0" viewBox="2 2 20 20" fill="#5f6368">
      <path d="M12 2C6.480 2 2 6.480 2 12s4.480 10 10 10 10-4.480 10-10S17.520 2 12 2zm-1 17.930c-3.950-.490-7-3.850-7-7.930 0-.620.080-1.210.210-1.790L9 15v1c0 1.100.900 2 2 2v1.930zm6.900-2.540c-.260-.810-1-1.390-1.900-1.390h-1v-3c0-.550-.450-1-1-1H8v-2h2c.550 0 1-.450 1-1V7h2c1.100 0 2-.900 2-2v-.410c2.930 1.190 5 4.060 5 7.410 0 2.080-.800 3.970-2.100 5.390z" />
    </svg>
  );
}

function AppsIcon() {
  const colors = ["#ea4335", "#ea4335", "#ea4335", "#34a853", "#1a9cf5", "#fbaa05", "#34a853", "#fbaa05", "#fbaa05"];
  return (
    <div className="grid size-[20px] shrink-0 grid-cols-3 gap-[3px]">
      {colors.map((c, i) => (
        <i key={i} style={{ background: c }} />
      ))}
    </div>
  );
}

function GoogleIcon() {
  return (
    <svg className="h-[19px] w-[19px] shrink-0" viewBox="0 0 48 48">
      <path fill="#EA4335" d="M24 9.500c3.540 0 6.710 1.220 9.210 3.600l6.850-6.850C35.900 2.380 30.470 0 24 0 14.620 0 6.510 5.380 2.560 13.220l7.980 6.190C12.430 13.720 17.740 9.500 24 9.500z" />
      <path fill="#4285F4" d="M46.980 24.550c0-1.570-.15-3.090-.38-4.550H24v9.020h12.940c-.58 2.960-2.260 5.480-4.780 7.180l7.730 6c4.510-4.180 7.090-10.360 7.090-17.650z" />
      <path fill="#FBBC05" d="M10.530 28.590c-.48-1.450-.76-2.990-.76-4.590s.27-3.140.76-4.590l-7.980-6.190C.92 16.460 0 20.120 0 24c0 3.880.92 7.540 2.560 10.780l7.970-6.190z" />
      <path fill="#34A853" d="M24 48c6.480 0 11.930-2.130 15.890-5.810l-7.730-6c-2.150 1.450-4.920 2.300-8.160 2.300-6.260 0-11.570-4.220-13.470-9.910l-7.980 6.190C6.510 42.620 14.620 48 24 48z" />
    </svg>
  );
}

function VtopIcon() {
  return (
    <svg className="size-[22px] shrink-0" viewBox="0 0 22 22">
      <circle cx="11" cy="9.500" r="8.500" fill="#e8edf8" stroke="#8fa3d3" strokeWidth="1.800" />
      <path d="M5.500 8.500h11l.5 2.500-2 3H7l-2-3z" fill="#7388c6" />
      <path d="M4.500 11h13M6.500 13h9" stroke="#3f58a8" />
      <path d="M2 16c2 2.500 5 .5 9 .5s7 2 9-.5l-.5 5.500-4-2.500h-9l-4 2.500z" fill="#b4c2e6" />
      <path d="M3 18l2 1.500m12 0l2-1.500M7 18h8" stroke="#7f94cc" fill="none" />
      <path d="M8 6l3-2 3 2" stroke="#98a9d6" fill="none" />
    </svg>
  );
}

function GmailIcon() {
  return (
    <svg className="h-[17px] w-[22px] shrink-0" viewBox="52 42 88 66">
      <path fill="#4285f4" d="M58 108h14V74L52 59v43c0 3.320 2.690 6 6 6" />
      <path fill="#34a853" d="M120 108h14c3.320 0 6-2.690 6-6V59l-20 15" />
      <path fill="#fbbc04" d="M120 48v26l20-15v-8c0-7.420-8.470-11.650-14.400-7.200" />
      <path fill="#ea4335" d="M72 74V48l24 18 24-18v26L96 92" />
      <path fill="#c5221f" d="M52 51v8l20 15V48l-5.600-4.200c-5.940-4.450-14.400-.22-14.400 7.200" />
    </svg>
  );
}

function CanvasIcon() {
  return (
    <svg className="size-[24px] shrink-0" viewBox="-12 -12 24 24">
      {[0, 45, 90, 135, 180, 225, 270, 315].map((a) => (
        <g key={a} transform={`rotate(${a})`} fill="#e4382b">
          <path d="M-3.800 -11.200A12 12 0 0 1 3.800 -11.200A3.900 3.900 0 0 1 -3.800 -11.200Z" />
          <circle cy="-5.600" r=".9" />
        </g>
      ))}
    </svg>
  );
}

function SunIcon() {
  return (
    <svg className="size-[23px] shrink-0" viewBox="-11 -11 22 22">
      <path d="M-2-7L1-11 3-7 8-8 6-4 11-2 7 1 10 5 5 6 4 10 1 7-2 11-3 7-8 8-6 3-11 2-7-1-10-5-5-5-6-9Z" fill="#f1d23a" stroke="#8a7a2c" strokeWidth=".9" />
      <circle r="5.900" fill="#ee7a17" />
    </svg>
  );
}

function TeamsIcon() {
  return (
    <svg className="size-[24px] shrink-0" viewBox="0 0 24 24">
      <circle cx="12.500" cy="4" r="3.600" fill="#7b83eb" />
      <circle cx="20" cy="5.500" r="2.400" fill="#5059c9" />
      <path d="M16 9h7.500v7.500a4 4 0 0 1-7.500 2z" fill="#5059c9" />
      <path d="M7 9h11v9.500a5.500 5.500 0 0 1-11 0z" fill="#7b83eb" />
      <path d="M7 9h7v9H7z" fill="#4a52b5" />
      <rect x=".5" y="6" width="11.500" height="11.500" rx="1" fill="#464eb8" />
      <path d="M3.500 9h5.500M6.250 9v6" stroke="#fff" strokeWidth="1.600" />
    </svg>
  );
}

const bookmarks: { icon: React.ReactNode; label: string; box: string; text: string }[] = [
  { icon: <AppsIcon />, label: "Apps", box: "w-[102px]", text: "ml-[14px] tracking-[-0.4px]" },
  { icon: <GoogleIcon />, label: "Google", box: "w-[116px]", text: "ml-[13px] tracking-[-0.2px]" },
  { icon: <VtopIcon />, label: "vtop", box: "w-[96px]", text: "ml-[13px] tracking-[-0.3px]" },
  { icon: <GmailIcon />, label: "VIT", box: "w-[86px]", text: "ml-[13px] tracking-[-0.2px]" },
  { icon: <Globe />, label: "Dashboard", box: "w-[146px]", text: "ml-[13px] tracking-[-0.7px]" },
  { icon: <CanvasIcon />, label: "Dashboard", box: "w-[148px]", text: "ml-[11px] tracking-[-0.65px]" },
  { icon: <SunIcon />, label: "CodeTantra Teach...", box: "w-[212px]", text: "ml-[11px] tracking-[-0.7px]" },
  { icon: <TeamsIcon />, label: "teams", box: "w-[109px]", text: "ml-[12px] tracking-[-0.6px]" },
  { icon: <Globe />, label: "Summer Analytics 2...", box: "w-[231px]", text: "ml-[12px] tracking-[-0.45px]" },
  { icon: <Globe />, label: "Document", box: "w-[150px]", text: "ml-[12px] tracking-[-0.55px]" },
];

function TabStrip() {
  return (
    <div className="flex h-[51px] bg-[#dee1e6]">
      <div className="flex w-3 items-end bg-white">
        <div className="h-full w-full rounded-br-[10px] bg-[#dee1e6]" />
      </div>
      <div className="flex h-full w-[360px] shrink-0 bg-[#dee1e6]">
        <div className="flex h-full w-full items-center rounded-t-[10px] bg-white pl-[19px] pr-[17px]">
          <Globe />
          <span className="ml-[13px] flex-1 text-[18px] tracking-[-0.45px] text-[#3c4043]">Home - Brand</span>
          <svg className="size-[14px]" viewBox="0 0 14 14" stroke="#3c4043" strokeWidth="2"><path d="M1.500 1.500l11 11m0-11l-11 11" /></svg>
        </div>
      </div>
      <div className="w-3 bg-white"><div className="h-full w-full rounded-bl-[10px] bg-[#dee1e6]" /></div>
      <svg className="ml-3 mt-[17px] size-[18px]" viewBox="0 0 18 18" stroke="#3c4043" strokeWidth="2.500"><path d="M0 8.700h18M9 0v18" /></svg>
      <div className="flex-1" />
      <svg className="mr-[49px] mt-[15px] size-[21px]" viewBox="0 0 21 21"><circle cx="10.500" cy="10.500" r="10.500" fill="#3c4043" /><path d="M6 7.300h9l-4.500 7z" fill="#dee1e6" /></svg>
      <svg className="mr-[52px] mt-[14px] size-[16px]" viewBox="0 0 16 16" stroke="#000"><path d="M0 7.500h15" /></svg>
      <svg className="mr-[53px] mt-[14px] size-[16px]" viewBox="0 0 16 16" stroke="#000" fill="none"><path d="M.5 3.500h11v11H.5zM3.500 3.500V.5h11v11h-3" /></svg>
      <svg className="mr-[26px] mt-[14px] size-[16px]" viewBox="0 0 16 16" stroke="#000"><path d="M.5.500l14 14m0-14l-14 14" strokeWidth="1.100" /></svg>
    </div>
  );
}

function Toolbar() {
  return (
    <div className="flex h-[54px] items-center bg-white pl-[23px]">
      <svg className="size-[20px]" viewBox="0 0 20 20" stroke="#5f6368" strokeWidth="2.200" fill="none"><path d="M20 9.500H1.500M10 .500L1.500 9.500 10 18.500" /></svg>
      <svg className="ml-[28px] size-[20px]" viewBox="0 0 20 20" stroke="#bdc1c6" strokeWidth="2.200" fill="none"><path d="M0 9.500h18.500M10 .500l8.500 9L10 18.500" /></svg>
      <svg className="ml-[28px] size-[21px]" viewBox="0 0 21 21"><path d="M17.500 5.500A8.800 8.800 0 1 0 19 13" stroke="#5f6368" strokeWidth="2.300" fill="none" /><path d="M20.500.500v8.300h-8.300z" fill="#5f6368" /></svg>
      <div className="ml-[22px] flex h-[42px] w-[1644px] items-center rounded-full bg-[#f1f3f4] pl-[17px] pr-[16px]">
        <svg className="size-[21px]" viewBox="0 0 21 21"><circle cx="10.500" cy="10.500" r="9.300" fill="none" stroke="#5f6368" strokeWidth="2" /><path d="M10.500 9.300v6M10.500 5.500v2.200" stroke="#5f6368" strokeWidth="2.200" /></svg>
        <span className="ml-[13px] pt-[2px] text-[21px] tracking-[-0.62px] text-[#5f6368]"><span className="text-[#202124]">localhost</span>:3000/welcome</span>
        <div className="flex-1" />
        <svg className="size-[21px]" viewBox="0 0 21 21" stroke="#5f6368" fill="none"><circle cx="8" cy="8" r="7" strokeWidth="2" /><path d="M4.500 8h7" strokeWidth="1.500" /><path d="M13 13l6.500 6.500" strokeWidth="2.600" /></svg>
        <svg className="ml-[26px] size-[23px]" viewBox="0 0 24 24"><path d="M12 2.800l2.700 6.300 6.900.6-5.200 4.500 1.600 6.700-6-3.600-6 3.600 1.600-6.700L2.400 9.700l6.900-.6z" fill="none" stroke="#5f6368" strokeWidth="2" /></svg>
      </div>
      <div className="ml-[17px] grid size-[33px] place-items-center rounded-full bg-[#455a64] pb-[3px] text-[17px] leading-none text-white">n</div>
      <svg className="ml-[28px] h-[22px] w-[6px]" viewBox="0 0 6 22" fill="#5f6368"><circle cx="3" cy="3" r="2.300" /><circle cx="3" cy="10.500" r="2.300" /><circle cx="3" cy="18" r="2.300" /></svg>
    </div>
  );
}

function BookmarkBar() {
  return (
    <div className="flex h-[50px] items-center border-b-2 border-[#dadce0] bg-white pb-[6px] pl-[23px] text-[18px] text-[#3c4043]">
      {bookmarks.map((b, i) => (
        <div key={i} className={`flex shrink-0 items-center whitespace-nowrap ${b.box}`}>
          {b.icon}
          <span className={b.text}>{b.label}</span>
        </div>
      ))}
      <svg className="ml-[102px] h-[10px] w-[10px] shrink-0" viewBox="0 0 10 10" fill="none" stroke="#4a4e52" strokeWidth="1.800"><path d="M.8.800L4.300 5 .8 9.200M5 .800L8.500 5 5 9.200" /></svg>
      <div className="ml-[15px] h-[23px] w-px shrink-0 bg-[#c8cacd]" />
      <svg className="ml-[18px] h-[23px] w-[19px] shrink-0" viewBox="0 0 19 23"><rect x=".5" y="1" width="17" height="21" rx="1" fill="#ffe68f" stroke="#f6cf45" /><path d="M14.500 21v-5a1.500 1.500 0 0 1 3 0v5" fill="#ffe68f" stroke="#f0be22" /></svg>
      <span className="ml-[15px] w-[140px] whitespace-nowrap tracking-[-0.65px]">Other bookmarks</span>
      <div className="ml-[15px] h-[23px] w-px shrink-0 bg-[#c8cacd]" />
      <svg className="ml-[16px] size-[22px] shrink-0" viewBox="0 0 22 22"><rect x="1" y="1" width="20" height="20" fill="none" stroke="#5f6368" strokeWidth="2" /><path d="M4.500 6.500h3m2 0h7.500M4.500 11h3m2 0h7.500m-12.500 4.500h3m2 0h7.500" stroke="#5f6368" strokeWidth="2" /></svg>
      <span className="ml-[13px] whitespace-nowrap tracking-[-0.3px] text-[#202124]">Reading list</span>
    </div>
  );
}

const links = [
  ["HOME", "w-[121px]"],
  ["FORUM", "w-[133px]"],
  ["WALL", "w-[117px]"],
  ["CONFRENCE", "w-[180px]"],
  ["MAKEPOST", "w-[166px]"],
  ["LOGOUT", "w-[90px]"],
];

function Page() {
  return (
    <div className="flex min-h-0 flex-1">
      <main className="flex h-full w-[1895px] flex-col overflow-hidden bg-[#f5f5f5]">
        <nav className="z-10 flex h-[113px] shrink-0 items-center bg-white shadow-[0_8px_20px_rgba(0,0,0,0.07)]">
          <div className="w-[1006px] shrink-0 pb-[2px] pl-[41px] font-['Lato'] text-[32px] font-light tracking-[0.6px] text-black">SHARE IT OUT</div>
          {links.map(([label, w]) => (
            <a key={label} className={`shrink-0 font-['Inter'] text-[16.5px] font-semibold tracking-[1.2px] text-[#212121] ${w}`}>{label}</a>
          ))}
        </nav>
        <section className="ml-[198px] mt-[7px] flex w-[1499px] flex-1 flex-col items-center overflow-hidden bg-white">
          <h2 className="mt-[44px] h-[81px] shrink-0 font-['Inter'] text-[31px] font-light leading-[46px] tracking-[1.8px] text-[#111]">Coronavirus Map</h2>
          <div className="shrink-0"><WorldMap /></div>
        </section>
      </main>
      <div className="flex w-[25px] flex-col items-center bg-[#f1f1f1]">
        <svg className="mt-[10px] h-[6px] w-[11px]" viewBox="0 0 11 6" fill="#505050"><path d="M0 6L5.500 0 11 6z" /></svg>
        <div className="mt-[181px] h-[142px] w-[21px] bg-[#c1c1c1]" />
        <svg className="mb-[9px] mt-auto h-[6px] w-[11px]" viewBox="0 0 11 6" fill="#505050"><path d="M0 0h11L5.500 6z" /></svg>
      </div>
    </div>
  );
}

function EdgeIcon() {
  return (
    <svg className="size-[36px]" viewBox="0 0 36 36">
      <defs>
        <linearGradient id="edgeTop" x1="0" y1="0" x2="1" y2=".4"><stop offset="0" stopColor="#1a9ee0" /><stop offset=".55" stopColor="#2fc2dc" /><stop offset="1" stopColor="#63dd4f" /></linearGradient>
        <linearGradient id="edgeLow" x1="0" y1="0" x2="1" y2="1"><stop offset="0" stopColor="#1b91d8" /><stop offset="1" stopColor="#0c59a4" /></linearGradient>
      </defs>
      <path d="M1 16C2 7 9 .5 18 .500c10 0 17 6.500 17 14.500 0 6-4.500 9.500-9.500 9.500-4 0-6-1.500-6-3 0-1 1.500-2 1.500-4.500 0-3.500-3.500-6.500-8.500-6.500C6.500 10.500 2 13 1 16z" fill="url(#edgeTop)" />
      <path d="M1 16c1-3.500 5.500-6 11-6 4.500 0 7.500 2 8.500 4.500-6-1-9 4-7 10 1.500 5 7.500 9 17 5-3 4-7.500 6-12.500 6C8 35.500 0 27 1 16z" fill="url(#edgeLow)" />
      <path d="M15 14c-4 3-4.500 9 0 13.500 4.500 4 11 4.500 17 .5l-1.500 2.500C25 34.500 17 35 12.500 29 9 24 10 17 15 14z" fill="#0b4a91" opacity=".6" />
    </svg>
  );
}

function TaskButton({ box, bar, children }: { box: string; bar?: string; children: React.ReactNode }) {
  return (
    <div className={`flex h-full shrink-0 flex-col items-center ${box}`}>
      <div className="flex min-h-0 flex-1 items-center pt-[2px]">{children}</div>
      <div className={`h-[3px] shrink-0 ${bar ?? ""}`} />
    </div>
  );
}

function Taskbar() {
  return (
    <footer className="flex h-[60px] shrink-0 bg-[#222] text-white">
      <div className="grid w-[73px] place-items-center pr-[1px]">
        <svg className="size-[24px]" viewBox="0 0 24 24" fill="#fff"><path d="M0 3.400l10-1.400v9.400H0zM11 1.900L24 0v11.400H11zM0 12.400h10V22L0 20.600zM11 12.400h13V24l-13-1.900z" /></svg>
      </div>
      <div className="flex w-[515px] items-center border-2 border-[#c0c0c0] bg-[#f2f2f2]">
        <svg className="ml-[14px] size-[25px]" viewBox="0 0 25 25" fill="none" stroke="#222" strokeWidth="1.700"><circle cx="16.500" cy="8" r="7" /><path d="M11.500 13L1 24" /></svg>
        <span className="ml-[18px] pt-[4px] text-[21.5px] tracking-[0.02px] text-[#303030]">Type here to search</span>
      </div>
      <TaskButton box="w-[71px]"><svg className="size-[26px]" viewBox="0 0 26 26"><circle cx="13" cy="13" r="10.300" fill="none" stroke="#fff" strokeWidth="3" /></svg></TaskButton>
      <TaskButton box="w-[73px]"><svg className="size-[26px]" viewBox="0 0 26 26" fill="none" stroke="#fff" strokeWidth="1.600"><path d="M2 1v4h15V1M2 25v-4h15v4M2 9h15v8H2zM23 1v5M23 11v14M21 9h4" /></svg></TaskButton>
      <TaskButton box="w-[82px]">
        <svg className="size-[36px]" viewBox="0 0 36 36"><rect x="1" y="1" width="34" height="34" fill="#a98c3f" stroke="#8a3e17" strokeWidth="2.500" /><path d="M3 3l30 30M33 3L3 33" stroke="#5d4d2c" strokeWidth="5" /><g fill="#ffdc25" fontFamily="Liberation Serif, serif" fontWeight="700" fontSize="10" textAnchor="middle"><text x="18" y="10">B</text><text x="7" y="21.500">D</text><text x="18" y="21.500">O</text><text x="29" y="21.500">S</text><text x="18" y="33">X</text></g></svg>
      </TaskButton>
      <TaskButton box="w-[68px]"><EdgeIcon /></TaskButton>
      <TaskButton box="ml-[11px] w-[61px]" bar="w-full bg-[#8fe3e8]">
        <svg className="h-[28px] w-[33px]" viewBox="0 0 33 28"><path d="M0 1.500A1.500 1.500 0 0 1 1.500 0H12l2.500 3H31.500A1.500 1.500 0 0 1 33 4.500V25H0z" fill="#e3a21a" /><path d="M0 5h12.500L15 3h18v22.500H0z" fill="#ffd766" /><path d="M5 28V17.500L7.500 15h18l2.500 2.500V28h-6v-6.500H11V28z" fill="#3f95db" /></svg>
      </TaskButton>
      <TaskButton box="ml-[8px] w-[67px] bg-[#4a4a4a]" bar="w-full bg-[#8fe3e8]">
        <svg className="ml-[6px] size-[38px]" viewBox="0 0 38 38">
          <circle cx="17" cy="17" r="16" fill="#db4437" />
          <path d="M17 17L3.100 9A16 16 0 0 0 17 33L24 21z" fill="#0f9d58" />
          <path d="M17 9h13.900A16 16 0 0 1 17 33l7-12z" fill="#ffcd40" />
          <circle cx="17" cy="17" r="7.800" fill="#fff" /><circle cx="17" cy="17" r="6" fill="#4285f4" />
          <circle cx="26.500" cy="26" r="11" fill="#455a64" stroke="#333" strokeWidth=".5" />
          <text x="26.500" y="31" fill="#e8eaed" fontSize="14" fontFamily="Open Sans, sans-serif" textAnchor="middle">n</text>
        </svg>
      </TaskButton>
      <TaskButton box="w-[6px] border-l border-[#222] bg-[#3c3c3c]" bar="w-full bg-[#6faeb2]"><span /></TaskButton>
      <div className="ml-[8px] flex"><TaskButton box="w-[48px]" bar="w-full bg-[#8fe3e8]">
        <svg className="ml-[12px] size-[36px]" viewBox="0 0 36 36"><path d="M26 0L9.500 15 4 10.500 1 12v12l3 1.500L9.500 21 26 36V26L15 18l11-8z" fill="#0a7cc5" /><path d="M26 0l9 4v28l-9 4z" fill="#2aa9f3" /><path d="M1 24L26 1v9L4 25.500z" fill="#1688d2" /></svg>
      </TaskButton>
      <TaskButton box="w-[13px]" bar="w-full bg-[#6faeb2]"><span /></TaskButton></div>
      <div className="flex-1" />
      <div className="flex items-center">
        <svg className="h-[11px] w-[19px]" viewBox="0 0 19 11" fill="none" stroke="#fff" strokeWidth="1.700"><path d="M.8 10.200L9.500 1.300l8.700 8.900" /></svg>
        <svg className="ml-[14px] h-[17px] w-[25px]" viewBox="0 0 25 17" fill="none" stroke="#fff" strokeWidth="1.300"><path d="M2.500 0v4M6.500 0v4M1 4h7v3l-2 3H3L1 7zM4.500 10v6M9 4.700h13.500V15.300H6.500" /><path d="M9.500 6.500h11.300v7.200H7.500V10L9.500 8z" fill="#fff" /><path d="M24 8v4" strokeWidth="2" /></svg>
        <svg className="ml-[12px] h-[20px] w-[24px]" viewBox="0 0 24 20" fill="none" stroke="#fff" strokeWidth="1.300"><path d="M1 7h3.500L10 1.500v17L4.500 13H1z" /><path d="M13 7.500q2 2.500 0 5M16 5q4 5 0 10" /><path d="M19 2q6 8 0 16" stroke="#777" /></svg>
        <svg className="ml-[15px] size-[20px]" viewBox="0 0 20 20" fill="none" stroke="#ddd" strokeWidth="1.300"><path d="M1 19C1 9 9 1 19 1M5.500 19C5.500 11.500 11.500 5.500 19 5.500M10 19c0-5 4-9 9-9" /><path d="M14 19c0-2.500 2-4.500 5-4.500" /><circle cx="18" cy="18" r="1.700" fill="#fff" stroke="none" /></svg>
        <span className="ml-[17px] w-[36px] pt-[1px] text-[17.5px] tracking-[-0.6px]">ENG</span>
        <div className="ml-[14px] flex w-[100px] flex-col items-center whitespace-nowrap pt-[1px] text-[18px] leading-[28px] tracking-[-0.1px]"><span>00:19</span><span>21-08-2021</span></div>
        <svg className="ml-[22px] mt-[7px] size-[38px]" viewBox="0 0 38 38"><path d="M2 1h24v19H15l-4 5-4-5H2z" fill="#fff" /><path d="M6.500 6.500h15M6.500 10.500h15M6.500 14.500h15" stroke="#222" strokeWidth="1.200" /><circle cx="26" cy="25" r="12" fill="#333" fillOpacity=".9" stroke="#999" /><text x="26" y="31" fill="#fff" fontSize="16" fontWeight="700" fontFamily="Open Sans, sans-serif" textAnchor="middle">1</text></svg>
        <div className="ml-[20px] h-[60px] w-[7px] border-l border-[#888]" />
      </div>
    </footer>
  );
}

export default function App() {
  return (
    <div className="flex h-[1080px] w-[1920px] flex-col overflow-hidden bg-white font-['Open_Sans',sans-serif]">
      <TabStrip />
      <Toolbar />
      <BookmarkBar />
      <Page />
      <Taskbar />
    </div>
  );
}
